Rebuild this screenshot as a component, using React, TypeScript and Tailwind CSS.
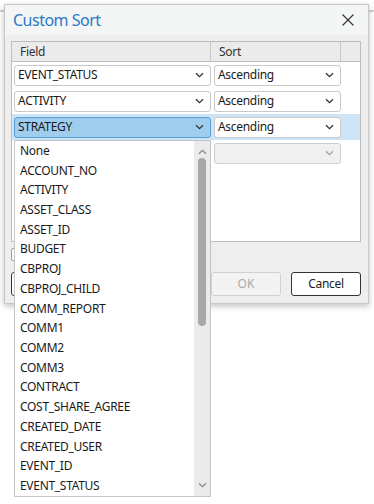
const FIELDS = [
  "None",
  "ACCOUNT_NO",
  "ACTIVITY",
  "ASSET_CLASS",
  "ASSET_ID",
  "BUDGET",
  "CBPROJ",
  "CBPROJ_CHILD",
  "COMM_REPORT",
  "COMM1",
  "COMM2",
  "COMM3",
  "CONTRACT",
  "COST_SHARE_AGREE",
  "CREATED_DATE",
  "CREATED_USER",
  "EVENT_ID",
  "EVENT_STATUS",
];

type Row = { field: string; sort: string; selected?: boolean; empty?: boolean };

const ROWS: Row[] = [
  { field: "EVENT_STATUS", sort: "Ascending" },
  { field: "ACTIVITY", sort: "Ascending" },
  { field: "STRATEGY", sort: "Ascending", selected: true },
  { field: "", sort: "", empty: true },
];

function Chevron({ color = "#333333", up = false }: { color?: string; up?: boolean }) {
  return (
    <svg width="9" height="6" viewBox="0 0 9 6" className={up ? "rotate-180" : ""}>
      <path d="M1 1.2 L4.5 4.7 L8 1.2" fill="none" stroke={color} strokeWidth="1.3" />
    </svg>
  );
}

function Select({ value, width, selected, disabled }: { value: string; width: string; selected?: boolean; disabled?: boolean }) {
  const tone = selected
    ? "bg-[#9fcdee] border-[#5c9fd6]"
    : disabled
      ? "bg-[#f0f0f0] border-[#cfcfcf]"
      : "bg-white border-[#c9c9c9]";
  return (
    <div className={`${width} h-[21px] flex items-center justify-between border rounded-[3px] pl-[3px] pr-[6px] ${tone}`}>
      <span className="text-[12px] tracking-[-0.3px] text-[#1a1a1a] leading-none">{value}</span>
      <Chevron color={disabled ? "#a0a0a0" : "#333333"} />
    </div>
  );
}

function FieldDropdown() {
  return (
    <div className="absolute left-[14px] top-[140px] w-[197px] h-[357px] bg-white border border-[#c4c4c4] flex">
      <div className="flex-1 flex flex-col">
        {FIELDS.map((f) => (
          <div key={f} className="h-[19.75px] flex items-center pl-[5px] text-[12px] tracking-[-0.3px] text-[#1a1a1a]">
            {f}
          </div>
        ))}
      </div>
      <div className="w-[16px] bg-[#ebebeb] flex flex-col items-center">
        <div className="h-[14px] flex items-end">
          <Chevron color="#8a8a8a" up />
        </div>
        <div className="w-[8px] h-[168px] mt-[3px] rounded-full bg-[#a8a8a8]" />
        <div className="flex-1" />
        <div className="h-[14px] flex items-start">
          <Chevron color="#8a8a8a" />
        </div>
      </div>
    </div>
  );
}

export default function App() {
  return (
    <div
      className="relative w-[374px] h-[504px] bg-white overflow-hidden pt-[4px] pl-[4px]"
      style={{ fontFamily: '"Noto Sans", "Open Sans", sans-serif' }}
    >
      <div className="absolute left-0 right-0 top-[10px] h-[2px] bg-[#d2d2d2]" />
      <div className="relative w-[365px] h-[300px] bg-[#eeeeee] border border-[#c8c8c8] shadow-[0_2px_6px_rgba(0,0,0,0.25)] flex flex-col">
        <div className="h-[30px] bg-[#f4f6f6] flex items-center justify-between pl-[8px] pr-[14px]">
          <span className="text-[16px] tracking-[-0.5px] text-[#2a78c6]">Custom Sort</span>
          <svg width="12" height="12" viewBox="0 0 12 12">
            <path d="M0.5 0.5 L11.5 11.5 M11.5 0.5 L0.5 11.5" stroke="#333333" strokeWidth="1.1" />
          </svg>
        </div>
        <div className="flex-1 flex flex-col pl-[6px] pr-[7px] pt-[6px]">
          <div className="h-[201px] border border-[#bdbdbd] bg-white flex flex-col">
            <div className="h-[20px] bg-[#ebebeb] border-b border-[#bdbdbd] flex text-[12px] tracking-[-0.3px] text-[#333333]">
              <div className="w-[199px] border-r border-[#c8c8c8] pl-[8px] flex items-center">Field</div>
              <div className="w-[130px] border-r border-[#c8c8c8] pl-[8px] flex items-center">Sort</div>
              <div className="flex-1" />
            </div>
            {ROWS.map((r, i) => (
              <div key={i} className={`h-[26px] flex items-center pl-[2px] gap-[3px] ${r.selected ? "bg-[#cde5f7]" : ""}`}>
                <Select value={r.field} width="w-[197px]" selected={r.selected} />
                <Select value={r.sort} width="w-[127px]" disabled={r.empty} />
              </div>
            ))}
          </div>
          <div className="mt-[6px] flex items-center">
            <div className="w-[13px] h-[13px] border border-[#9a9a9a] bg-white rounded-[2px]" />
          </div>
          <div className="mt-[11px] flex items-center gap-[10px]">
            <div className="w-[80px] h-[24px] border border-[#333333] rounded-[3px] bg-white" />
            <div className="flex-1" />
            <div className="w-[70px] h-[24px] border border-[#d0d0d0] rounded-[3px] bg-[#f3f3f3] text-[12px] text-[#aaaaaa] flex items-center justify-center">
              OK
            </div>
            <div className="w-[70px] h-[24px] border border-[#333333] rounded-[3px] bg-white text-[12px] tracking-[-0.3px] text-[#1a1a1a] flex items-center justify-center">
              Cancel
            </div>
          </div>
        </div>
      </div>
      <FieldDropdown />
    </div>
  );
}
